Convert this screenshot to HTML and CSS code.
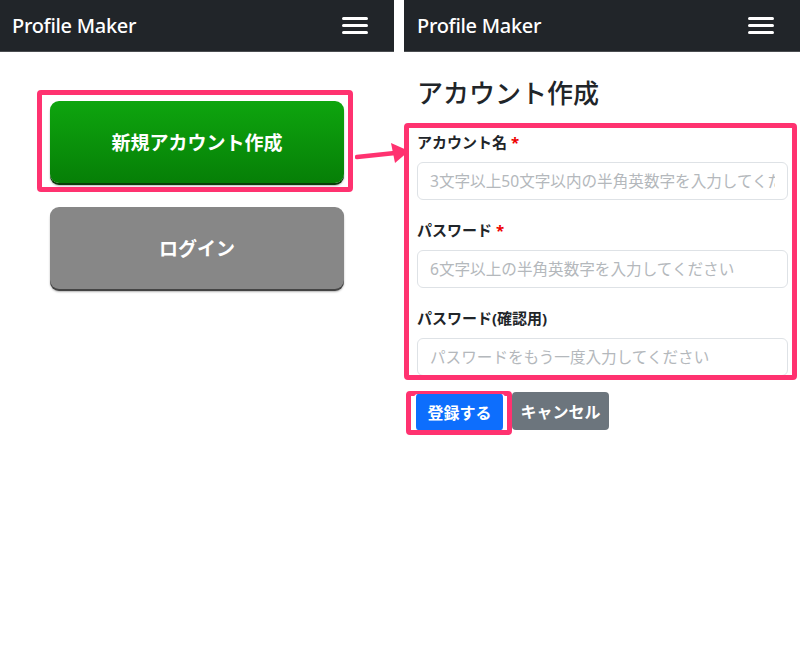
FILE: index.html
```html
<html>
<head>
<meta name="viewport" content="width=device-width, initial-scale=1.0" />
<link rel="stylesheet" href="styles.css">
</head>
<body>
<div class="screens">

  <div class="phone left">
    <div class="navbar">
      <span class="brand">Profile Maker</span>
      <span class="burger"><i></i><i></i><i></i></span>
    </div>
    <div class="home">
      <div class="mark mark-top">
        <a class="big-btn green">新規アカウント作成</a>
      </div>
      <a class="big-btn gray">ログイン</a>
    </div>
  </div>

  <div class="phone right">
    <div class="navbar">
      <span class="brand">Profile Maker</span>
      <span class="burger"><i></i><i></i><i></i></span>
    </div>
    <div class="signup">
      <h2 class="title">アカウント作成</h2>
      <div class="mark mark-form">
        <label class="lbl">アカウント名 <span class="req">*</span></label>
        <input class="field" type="text" placeholder="3文字以上50文字以内の半角英数字を入力してください">
        <label class="lbl">パスワード <span class="req">*</span></label>
        <input class="field" type="password" placeholder="6文字以上の半角英数字を入力してください">
        <label class="lbl">パスワード(確認用)</label>
        <input class="field" type="password" placeholder="パスワードをもう一度入力してください">
      </div>
      <div class="actions">
        <div class="mark mark-btn"><button class="btn blue">登録する</button></div>
        <button class="btn cancel">キャンセル</button>
      </div>
    </div>
  </div>

  <svg class="arrow" width="60" height="30" viewBox="0 0 60 30">
    <path d="M2 16 L40 12" stroke="#ff3270" stroke-width="4.5" stroke-linecap="round" fill="none"/>
    <path d="M54 10 L36 2 L40 22 Z" fill="#ff3270"/>
  </svg>
</div>
</body>
</html>
```

FILE: styles.css
```css
body {
  margin: 0;
  background: #fff;
  font-family: "Noto Sans", "Noto Sans CJK JP", sans-serif;
}

.screens {
  position: relative;
  display: flex;
  gap: 10px;
  width: 800px;
  height: 660px;
}

.phone.left { width: 394px; }
.phone.right { width: 396px; }

.navbar {
  height: 52px;
  background: #212529;
  border-bottom: 1px solid #4a4d50;
  box-sizing: border-box;
  display: flex;
  align-items: center;
  justify-content: space-between;
  padding: 0 26px 0 12px;
}
.right .navbar { padding: 0 26px 0 13px; }

.brand {
  color: #fff;
  font-size: 20px;
  font-weight: 500;
  letter-spacing: -0.3px;
}

.burger {
  display: flex;
  flex-direction: column;
  gap: 4px;
  width: 26px;
}
.burger i {
  display: block;
  height: 3px;
  background: #fff;
  border-radius: 2px;
}

/* pink highlight frames */
.mark {
  border: 5px solid #ff3270;
  border-radius: 4px;
  box-sizing: border-box;
}

/* left screen */
.home {
  display: flex;
  flex-direction: column;
  align-items: flex-start;
}
.mark-top {
  margin: 38px 0 0 37px;
  width: 316px;
  height: 102px;
  padding: 6px 0 0 8px;
}
.big-btn {
  display: flex;
  align-items: center;
  justify-content: center;
  width: 294px;
  height: 82px;
  border-radius: 9px;
  color: #fff;
  font-size: 19px;
  font-weight: bold;
  box-sizing: border-box;
}
.big-btn.green {
  background: linear-gradient(#0ea50e, #067f07);
  box-shadow: 0 2px 0 #0a3d0a, 0 3px 2px rgba(0,0,0,.3);
}
.big-btn.gray {
  margin: 15px 0 0 50px;
  background: #878787;
  box-shadow: 0 2px 0 #444, 0 3px 2px rgba(0,0,0,.3);
}

/* right screen */
.title {
  margin: 23px 0 12px 13px;
  font-size: 26px;
  font-weight: 500;
  line-height: 36px;
  color: #212529;
}
.mark-form {
  width: 393px;
  height: 257px;
  padding: 3px 4px 0 8px;
  overflow: hidden;
  display: flex;
  flex-direction: column;
}
.lbl {
  font-size: 15px;
  font-weight: bold;
  line-height: 22px;
  color: #212529;
  margin-bottom: 9px;
}
.req { color: #e00; }
.field {
  height: 38px;
  width: 371px;
  border: 1px solid #dee2e6;
  border-radius: 6px;
  padding: 0 12px;
  font-family: "Noto Sans", "Noto Sans CJK JP", sans-serif;
  font-size: 15.6px;
  margin-bottom: 19px;
  box-sizing: border-box;
  flex-shrink: 0;
}
.field::placeholder { color: #b4b8bc; }

.actions {
  display: flex;
  align-items: flex-start;
  margin: 11px 0 0 2px;
}
.mark-btn {
  width: 106px;
  height: 44px;
  padding: 0 2px 0 3px;
}
.btn {
  display: block;
  border: none;
  border-radius: 4px;
  color: #fff;
  font-family: "Noto Sans", "Noto Sans CJK JP", sans-serif;
  font-size: 16px;
  font-weight: bold;
  height: 36px;
  padding: 0;
}
.btn.blue {
  background: #0d6efd;
  width: 91px;
  margin-top: -2px;
  border-left: 2px solid #fff;
  border-right: 2px solid #fff;
}
.btn.cancel {
  background: #6c757d;
  width: 97px;
  height: 38px;
  margin-top: 1px;
}

.arrow {
  position: absolute;
  left: 355px;
  top: 141px;
}
```
